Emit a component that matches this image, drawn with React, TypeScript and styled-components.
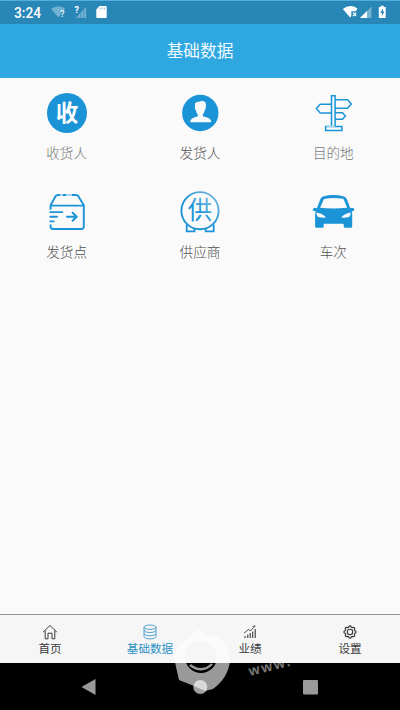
import React from 'react';
import styled, { createGlobalStyle } from 'styled-components';

const BLUE = '#1b93d7';

const GlobalStyle = createGlobalStyle`
  * { box-sizing: border-box; }
  body {
    margin: 0;
    background: #fafafa;
    font-family: Roboto, "Noto Sans CJK SC", sans-serif;
  }
`;

const Screen = styled.div`
  position: relative;
  display: flex;
  flex-direction: column;
  width: 400px;
  height: 710px;
  overflow: hidden;
  background: #fafafa;
`;

const StatusBar = styled.div`
  display: flex;
  justify-content: space-between;
  height: 24px;
  flex: none;
  padding-left: 14px;
  border-top: 1px solid #56aedb;
  background: #2887b7;
`;

const StatusGroup = styled.div`
  display: flex;
`;

const Clock = styled.span`
  width: 36px;
  color: #fff;
  font-size: 13.8px;
  font-weight: 500;
  line-height: 24px;
`;

const Header = styled.header`
  display: flex;
  align-items: center;
  justify-content: center;
  height: 54px;
  flex: none;
  padding-top: 1px;
  background: #2fa8e1;
  color: #f2faff;
  font-size: 16.7px;
  line-height: 24px;
`;

const Content = styled.main`
  flex: 1;
`;

const Grid = styled.div`
  display: grid;
  grid-template-columns: repeat(3, 1fr);
  grid-auto-rows: 99px;
  padding-top: 13px;
`;

const Entry = styled.div`
  display: flex;
  flex-direction: column;
  align-items: center;
  svg { display: block; flex: none; }
`;

const EntryLabel = styled.span<{ $pale?: boolean }>`
  margin-top: 8px;
  color: ${(p) => (p.$pale ? '#777' : '#505050')};
  font-size: 13.6px;
  font-weight: 300;
  line-height: 20px;
`;

const TabBar = styled.nav`
  display: grid;
  grid-template-columns: repeat(4, 1fr);
  height: 49px;
  flex: none;
  border-top: 1px solid #959595;
  background: #f6f6f6;
`;

const Tab = styled.div<{ $active?: boolean }>`
  display: flex;
  flex-direction: column;
  align-items: center;
  gap: 1px;
  padding-top: 9px;
  color: ${(p) => (p.$active ? '#2b91c4' : '#3a3a3a')};
  font-size: 11.6px;
  line-height: 16px;
  svg { display: block; flex: none; }
`;

const SystemNav = styled.div`
  height: 47px;
  flex: none;
  background: #000;
  svg { display: block; }
`;

const Watermark = styled.svg<{ $x: number; $y: number; $strength: number }>`
  position: absolute;
  left: ${(p) => p.$x}px;
  top: ${(p) => p.$y}px;
  opacity: ${(p) => p.$strength};
  pointer-events: none;
`;

const WatermarkMark = ({ x, y, strength }: { x: number; y: number; strength: number }) => (
  <Watermark $x={x} $y={y} $strength={strength} width="230" height="130" viewBox="0 0 230 130">
    <path
      fill="#fff"
      fillRule="evenodd"
      d="M3 72Q7 58 21 50L27 44L35 50L48 52Q59 62 59 76Q57 93 42 104L34 106L23 101L8 95L5 82ZM14 72A15 15 0 0 0 46 72A16 16 0 0 0 14 72Z"
    />
    <path d="M19 80Q31 89 41 79" fill="none" stroke="#fff" strokeWidth="2.4" />
    <text
      x="79"
      y="91"
      transform="rotate(-14 79 91)"
      fill="#fff"
      fillOpacity=".8"
      fontFamily="Liberation Sans, sans-serif"
      fontWeight="700"
      fontSize="14"
      letterSpacing="2"
    >
      www.
    </text>
  </Watermark>
);

const StatusLeftIcons = () => (
  <svg width="62" height="23" viewBox="50 1 62 23">
    <path d="M51 9Q58 4 65 8.5L64 10.5L61 11L60.5 15L58.5 17.5Z" fill="#fff" opacity=".35" />
    <text x="60.2" y="17" fill="#fff" opacity=".85" fontSize="8.5" fontWeight="700">?</text>
    <path d="M75.5 18L86 7V18Z" fill="#fff" opacity=".38" />
    <path d="M77.8 14.5V18M80.8 11.5V18M83.8 9V18" stroke="#2887b7" strokeWidth=".7" />
    <text x="74.4" y="12.8" fill="#fff" fontSize="9" fontWeight="700">?</text>
    <path d="M99.5 6H105.5Q106.7 6 106.7 7.2V17Q106.7 18 105.7 18H97.3Q96.3 18 96.3 17V9.5Z" fill="#fff" />
    <path d="M100 7.5V9.5M102.2 7.5V9.5M104.4 7.5V9.5" stroke="#6caacb" strokeWidth=".8" />
  </svg>
);

const StatusRightIcons = () => (
  <svg width="60" height="23" viewBox="340 1 60 23">
    <path d="M342.8 9Q350 3.5 357.5 8.5L355.8 11.3H351.3V16L350.2 17.5Z" fill="#fff" />
    <path d="M353 12.7L356.2 16M356.2 12.7L353 16" stroke="#fff" strokeWidth="1.2" />
    <path d="M360 18L371.5 6.5V18Z" fill="#fff" opacity=".35" />
    <path d="M360 18L367 11V18Z" fill="#fff" />
    <path d="M380.7 5.7H383.7V7H385.7V18H378.8V7H380.7Z" fill="#fff" />
    <path d="M382.8 8.5L380.2 13H382V16L384.4 11.5H382.8Z" fill="#2887b7" />
  </svg>
);

const EntrySvg = ({ children }: { children: React.ReactNode }) => (
  <svg width="44" height="44" viewBox="0 0 44 44" fill="none" stroke={BLUE}>
    {children}
  </svg>
);

const ReceiverIcon = () => (
  <EntrySvg>
    <circle cx="22" cy="22" r="20" fill={BLUE} stroke="none" />
    <text x="22" y="30" textAnchor="middle" fill="#fff" stroke="none" fontSize="22.5" fontWeight="700">收</text>
  </EntrySvg>
);

const SenderIcon = () => (
  <EntrySvg>
    <circle cx="22.3" cy="22" r="18.2" fill={BLUE} stroke="none" />
    <path
      d="M17 12.5Q18 10.5 20 11Q25 8.8 27.5 11.5Q28.3 13.5 27.7 16.4Q28 18.4 26.6 19.5Q26.2 22 24.8 23.4V25.3Q33.2 27.2 33.4 30.5Q33 31.2 32 31.2H13.4Q12.2 31.2 12.2 30.3Q12.8 27 19.8 25.3V23.4Q18.4 22 18 19.5Q16.5 18.5 17 16.3Z"
      fill="#fafafa"
      stroke="none"
    />
  </EntrySvg>
);

const DestinationIcon = () => (
  <EntrySvg>
    <g strokeWidth="1.5">
      <path d="M20.5 35.3V4.7H24.1V35.3" />
      <path d="M24.1 8.7H36.5L40.3 13L36.5 17.2H24.1M20.5 13.3H9.2L5.4 17.6L9.2 21.9H20.5M24.1 21.8H31.5L34.4 25L31.5 28.2H24.1" />
      <rect x="14.6" y="35.5" width="16.3" height="4" />
      <path d="M15.5 35.3H24" stroke="#a8d3ec" />
    </g>
  </EntrySvg>
);

const DispatchIcon = () => (
  <EntrySvg>
    <g strokeWidth="1.9" strokeLinejoin="round" strokeLinecap="round">
      <path d="M5.6 19V15.3L10.4 6.5Q11.2 5 13 5H31Q32.7 5 33.5 6.5L38.8 15.3V36.5Q38.8 39 36.3 39H8Q5.6 39 5.6 36.5V35.3M5.6 15.6H38.5" />
      <path d="M5.3 22.1H17.3M5.3 26.7H12M5.3 31.4H8.7" />
      <path d="M22 26.7H31M27.6 22.8L31.7 26.7L27.6 30.7" strokeWidth="2" />
    </g>
    <path d="M15 5H18M21 5H27" stroke="#a8d3ec" strokeWidth="1.9" />
  </EntrySvg>
);

const SupplierIcon = () => (
  <EntrySvg>
    <defs>
      <linearGradient id="supplier" x1="0" y1="1" x2="1" y2="0">
        <stop offset=".45" stopColor={BLUE} />
        <stop offset="1" stopColor="#83bfe2" />
      </linearGradient>
    </defs>
    <circle cx="22" cy="20.7" r="18.6" stroke="url(#supplier)" strokeWidth="1.9" />
    <path d="M8.7 34.5V41.4H16.5V38.4M27.7 38.4V41.4H35.7V34.5" strokeWidth="1.8" />
    <text x="22" y="29.4" textAnchor="middle" fill="url(#supplier)" stroke="none" fontSize="24.5">供</text>
  </EntrySvg>
);

const CarIcon = () => (
  <EntrySvg>
    <path
      fill={BLUE}
      stroke="none"
      fillRule="evenodd"
      d="M12 6.5Q22 3.6 33 6.5Q35 7.2 36 9.5L39.3 18.2L41.5 17.8Q43.4 18.3 43.3 20.2Q42.5 21.3 40.7 21.2Q41.5 23 41.2 26V36.5Q41.2 37.8 39.8 37.8H34Q32.7 37.8 32.7 36.5V33.8H12.7V36.5Q12.7 37.8 11.4 37.8H5.4Q4.1 37.8 4.1 36.5V25Q4.1 22.8 4.8 21.2Q2.6 21.5 1.7 20Q1.9 18 3.8 17.8L5.9 18.2L9.2 9.5Q10.2 7.2 12 6.5ZM13.4 9Q12.8 9.2 12.5 10L9.1 17.7Q22 19.2 36.1 17.7L33 10Q32.6 9 32 8.8Q22 7 13.4 9ZM5.5 22.5Q5.2 25.8 7.7 27.2L12.7 27.8Q15.5 27.7 13.8 25.9Q10.7 23.2 5.5 22.5ZM39.6 22.5Q34.6 23.2 31.4 25.9Q29.7 27.7 32.4 27.8L37.3 27.2Q40 25.8 39.6 22.5Z"
    />
  </EntrySvg>
);

const TabSvg = ({ children }: { children: React.ReactNode }) => (
  <svg width="16" height="16" viewBox="0 0 16 16" fill="none" stroke="currentColor">
    {children}
  </svg>
);

const HomeIcon = () => (
  <TabSvg>
    <path d="M1.2 8L8 1.5L14.8 8M3.2 6.5V14.8H6V9.2H10V14.8H12.8V6.5" strokeWidth="1" />
  </TabSvg>
);

const DataIcon = () => (
  <TabSvg>
    <g strokeWidth=".8">
      <ellipse cx="8" cy="3.2" rx="6" ry="2.2" />
      <path d="M2 3.2V12.8Q3 15 8 15T14 12.8V3.2M2 6.4Q3 8.6 8 8.6T14 6.4M2 9.6Q3 11.8 8 11.8T14 9.6" />
    </g>
  </TabSvg>
);

const ChartIcon = () => (
  <TabSvg>
    <path d="M2 9.2L6.7 5.3L8.2 7L13 2.2M10.8 2.4L13.3 1.8" strokeWidth=".9" />
    <path d="M3 12V14M5.8 10.5V14M8.2 9V14M10.7 7.5V14M13.2 5V14" strokeWidth="1.1" />
  </TabSvg>
);

const gear = Array.from({ length: 48 }, (_, i) => {
  const angle = (i / 48) * Math.PI * 2;
  const radius = 5.5 + 0.55 * Math.tanh(2.5 * Math.cos(angle * 8));
  return `${(8 + radius * Math.cos(angle)).toFixed(2)},${(8 + radius * Math.sin(angle)).toFixed(2)}`;
}).join(' ');

const SettingsIcon = () => (
  <TabSvg>
    <polygon points={gear} strokeWidth="1.2" strokeLinejoin="round" />
    <circle cx="8" cy="8" r="2.7" strokeWidth="1.1" />
  </TabSvg>
);

const entries = [
  { label: '收货人', Icon: ReceiverIcon, pale: true },
  { label: '发货人', Icon: SenderIcon },
  { label: '目的地', Icon: DestinationIcon, pale: true },
  { label: '发货点', Icon: DispatchIcon },
  { label: '供应商', Icon: SupplierIcon },
  { label: '车次', Icon: CarIcon },
];

const tabs = [
  { label: '首页', Icon: HomeIcon },
  { label: '基础数据', Icon: DataIcon, active: true },
  { label: '业绩', Icon: ChartIcon },
  { label: '设置', Icon: SettingsIcon },
];

export default function App() {
  return (
    <>
      <GlobalStyle />
      <Screen>
        <StatusBar>
          <StatusGroup>
            <Clock>3:24</Clock>
            <StatusLeftIcons />
          </StatusGroup>
          <StatusRightIcons />
        </StatusBar>
        <Header>基础数据</Header>
        <Content>
          <Grid>
            {entries.map(({ label, Icon, pale }) => (
              <Entry key={label}>
                <Icon />
                <EntryLabel $pale={pale}>{label}</EntryLabel>
              </Entry>
            ))}
          </Grid>
        </Content>
        <TabBar>
          {tabs.map(({ label, Icon, active }) => (
            <Tab key={label} $active={active}>
              <Icon />
              {label}
            </Tab>
          ))}
        </TabBar>
        <SystemNav>
          <svg width="400" height="47" viewBox="0 663 400 47">
            <path d="M81.5 687L95.5 679V695Z" fill="#999" />
            <rect x="303" y="680" width="15" height="14.5" rx="1" fill="#9a9a9a" />
            <circle cx="200.3" cy="687" r="7" fill="#a0a0a0" />
          </svg>
        </SystemNav>
        <WatermarkMark x={50} y={339} strength={0.3} />
        <WatermarkMark x={171} y={585} strength={0.6} />
      </Screen>
    </>
  );
}
